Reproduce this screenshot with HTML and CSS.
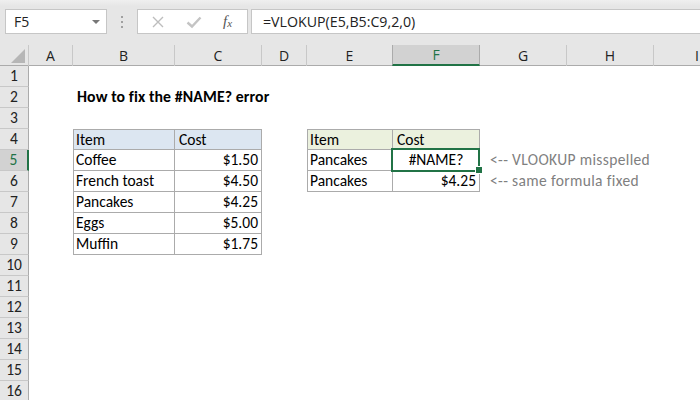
FILE: index.html
```html
<!DOCTYPE html>
<html>
<head>
<meta charset="utf-8">
<title>How to fix the #NAME? error</title>
<link rel="stylesheet" href="styles.css">
</head>
<body>
<div class="app">
  <div class="toolbar">
    <div class="namebox">
      <span class="nb-text">F5</span>
      <span class="dd"></span>
    </div>
    <div class="grip"><i></i><i></i><i></i></div>
    <div class="fbtns">
      <svg class="ic-x" width="14" height="14" viewBox="0 0 14 14"><path d="M2 2 L12 12 M12 2 L2 12" stroke="#bdbdbd" stroke-width="1.4" fill="none"/></svg>
      <svg class="ic-ok" width="16" height="14" viewBox="0 0 16 14"><path d="M1.5 7.5 L6 11.5 L14.5 2.5" stroke="#c4c4c4" stroke-width="2.4" fill="none"/></svg>
      <span class="fx">f<sub>x</sub></span>
    </div>
    <div class="finput">=VLOKUP(E5,B5:C9,2,0)</div>
  </div>

  <div class="sheet">
    <div class="row hdr">
      <div class="corner"><span class="tri"></span></div>
      <div class="ch">A</div>
      <div class="ch">B</div>
      <div class="ch">C</div>
      <div class="ch">D</div>
      <div class="ch">E</div>
      <div class="ch sel">F</div>
      <div class="ch">G</div>
      <div class="ch">H</div>
      <div class="ch">I</div>
    </div>

    <div class="row"><div class="rh">1</div></div>
    <div class="row">
      <div class="rh">2</div>
      <div class="c"></div>
      <div class="c title">How to fix the #NAME? error</div>
    </div>
    <div class="row"><div class="rh">3</div></div>
    <div class="row">
      <div class="rh">4</div>
      <div class="c"></div>
      <div class="c t first top blue">Item</div>
      <div class="c t top blue">Cost</div>
      <div class="c"></div>
      <div class="c t first top green">Item</div>
      <div class="c t top green">Cost</div>
    </div>
    <div class="row">
      <div class="rh rsel">5</div>
      <div class="c"></div>
      <div class="c t first">Coffee</div>
      <div class="c t num">$1.50</div>
      <div class="c"></div>
      <div class="c t first">Pancakes</div>
      <div class="c t err active">#NAME?</div>
      <div class="c note">&lt;-- VLOOKUP misspelled</div>
    </div>
    <div class="row">
      <div class="rh">6</div>
      <div class="c"></div>
      <div class="c t first">French toast</div>
      <div class="c t num">$4.50</div>
      <div class="c"></div>
      <div class="c t first">Pancakes</div>
      <div class="c t num">$4.25</div>
      <div class="c note">&lt;-- same formula fixed</div>
    </div>
    <div class="row">
      <div class="rh">7</div>
      <div class="c"></div>
      <div class="c t first">Pancakes</div>
      <div class="c t num">$4.25</div>
    </div>
    <div class="row">
      <div class="rh">8</div>
      <div class="c"></div>
      <div class="c t first">Eggs</div>
      <div class="c t num">$5.00</div>
    </div>
    <div class="row">
      <div class="rh">9</div>
      <div class="c"></div>
      <div class="c t first">Muffin</div>
      <div class="c t num">$1.75</div>
    </div>
    <div class="row"><div class="rh">10</div></div>
    <div class="row"><div class="rh">11</div></div>
    <div class="row"><div class="rh">12</div></div>
    <div class="row"><div class="rh">13</div></div>
    <div class="row"><div class="rh">14</div></div>
    <div class="row"><div class="rh">15</div></div>
    <div class="row"><div class="rh">16</div></div>
  </div>
</div>
</body>
</html>
```

FILE: styles.css
```css
* { box-sizing: border-box; }

html, body {
  margin: 0;
  padding: 0;
  width: 700px;
  height: 400px;
  overflow: hidden;
  background: #ffffff;
}

.app {
  width: 700px;
  height: 400px;
  overflow: hidden;
  font-family: "Carlito", "Lato", "Liberation Sans", sans-serif;
}

/* ---------- formula bar ---------- */
.toolbar {
  height: 45px;
  background: linear-gradient(#efefef 0, #e6e6e6 6px, #e6e6e6 100%);
  display: flex;
  align-items: flex-start;
  padding-top: 9px;
  padding-left: 5px;
}

.namebox {
  width: 102px;
  height: 25px;
  background: #fff;
  border: 1px solid #c6c6c6;
  display: flex;
  align-items: center;
  justify-content: space-between;
  padding: 0 6px 0 8px;
  font-family: "Open Sans", "Noto Sans", sans-serif;
  font-size: 14px;
  color: #222;
}

.dd {
  width: 0;
  height: 0;
  border-left: 4px solid transparent;
  border-right: 4px solid transparent;
  border-top: 4px solid #777;
  margin-top: 1px;
}

.grip {
  width: 30px;
  height: 25px;
  display: flex;
  flex-direction: column;
  align-items: center;
  justify-content: center;
  gap: 3px;
}
.grip i {
  display: block;
  width: 2px;
  height: 2px;
  background: #a0a0a0;
}

.fbtns {
  width: 111px;
  height: 25px;
  background: #fff;
  border: 1px solid #c6c6c6;
  display: flex;
  align-items: center;
  padding-left: 13px;
}
.ic-x { margin-right: 21px; }
.ic-ok { margin-right: 21px; }
.fx {
  font-family: "Liberation Serif", "DejaVu Serif", serif;
  font-style: italic;
  font-size: 15px;
  color: #555;
  line-height: 1;
}
.fx sub {
  font-size: 11px;
  vertical-align: -1px;
}

.finput {
  margin-left: 3px;
  flex: 1;
  height: 25px;
  background: #fff;
  border: 1px solid #c6c6c6;
  border-right: none;
  padding-left: 11px;
  font-family: "Open Sans", "Noto Sans", sans-serif;
  font-size: 14.2px;
  line-height: 23px;
  color: #222;
}

/* ---------- sheet ---------- */
.row {
  display: grid;
  grid-template-columns: 29px 44px 102px 87px 45px 86px 87px 87px 87px 87px;
  height: 21px;
}

.row.hdr {
  height: 21px;
  background: #e6e6e6;
  border-bottom: 1px solid #ababab;
}

.corner {
  position: relative;
  border-right: 1px solid #c8c8c8;
}
.corner .tri {
  position: absolute;
  right: 3px;
  bottom: 3px;
  width: 0;
  height: 0;
  border-left: 14px solid transparent;
  border-bottom: 14px solid #b6b6b6;
}

.ch {
  border-right: 1px solid #c8c8c8;
  text-align: center;
  font-family: "Open Sans", "Noto Sans", sans-serif;
  font-size: 14px;
  line-height: 21px;
  color: #222;
}
.ch.sel {
  background: #d2d2d2;
  color: #217346;
  border-bottom: 2px solid #217346;
  border-right: 1px solid #ababab;
  border-left: 1px solid #ababab;
  margin-left: -1px;
  line-height: 19px;
  height: 21px;
}

.rh {
  background: #e6e6e6;
  border-right: 1px solid #ababab;
  border-bottom: 1px solid #c8c8c8;
  text-align: center;
  font-size: 15.5px;
  line-height: 20px;
  color: #222;
}
.rh.rsel {
  background: #d2d2d2;
  color: #217346;
  border-right: 2px solid #217346;
}

.c {
  font-size: 15.5px;
  line-height: 20px;
  color: #000;
  padding: 0 4px;
  white-space: nowrap;
}

.title {
  font-weight: bold;
  font-size: 15.8px;
  letter-spacing: 0.1px;
  overflow: visible;
}

.t {
  border-right: 1px solid #ababab;
  border-bottom: 1px solid #ababab;
}
.t.first { border-left: 1px solid #ababab; padding-left: 2px; }
.t.top { border-top: 1px solid #ababab; line-height: 19px; }
.t.blue { background: #dce6f1; }
.t.green { background: #ebf1de; }
.t.num { text-align: right; padding-right: 3px; }
.t.err { text-align: center; }

.active { position: relative; }
.active::before {
  content: "";
  position: absolute;
  left: -2px;
  right: -1px;
  top: -2px;
  bottom: -2px;
  border: 2px solid #217346;
}
.active::after {
  content: "";
  position: absolute;
  right: -4px;
  bottom: -4px;
  width: 6px;
  height: 6px;
  background: #217346;
  border: 1px solid #fff;
}

.note {
  color: #7f7f7f;
  padding-left: 10px;
  letter-spacing: 0.35px;
  overflow: visible;
}
```
